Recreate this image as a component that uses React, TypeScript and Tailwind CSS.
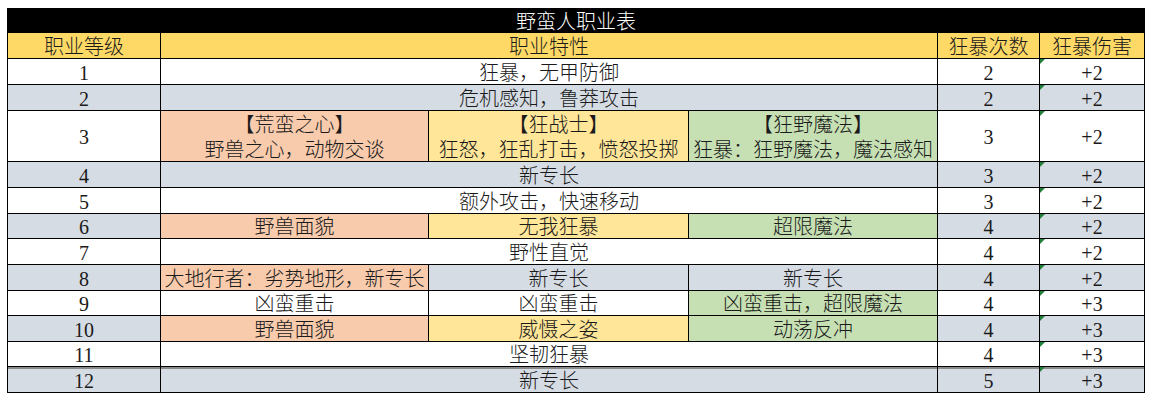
type Cell = { text: string; bg: string };

type Row = {
  level: string;
  bg: string;
  features: string | Cell[];
  count: string;
  dmg: string;
  divider?: boolean;
};

const W = 'bg-white';
const G = 'bg-[#d6dce4]';
const O = 'bg-[#f8cbad]';
const Y = 'bg-[#ffe699]';
const GR = 'bg-[#c6e0b4]';

const rows: Row[] = [
  { level: '1', bg: W, features: '狂暴，无甲防御', count: '2', dmg: '+2' },
  { level: '2', bg: G, features: '危机感知，鲁莽攻击', count: '2', dmg: '+2' },
  {
    level: '3',
    bg: W,
    features: [
      { text: '【荒蛮之心】\n野兽之心，动物交谈', bg: O },
      { text: '【狂战士】\n狂怒，狂乱打击，愤怒投掷', bg: Y },
      { text: '【狂野魔法】\n狂暴：狂野魔法，魔法感知', bg: GR },
    ],
    count: '3',
    dmg: '+2',
  },
  { level: '4', bg: G, features: '新专长', count: '3', dmg: '+2' },
  { level: '5', bg: W, features: '额外攻击，快速移动', count: '3', dmg: '+2' },
  {
    level: '6',
    bg: G,
    features: [
      { text: '野兽面貌', bg: O },
      { text: '无我狂暴', bg: Y },
      { text: '超限魔法', bg: GR },
    ],
    count: '4',
    dmg: '+2',
  },
  { level: '7', bg: W, features: '野性直觉', count: '4', dmg: '+2' },
  {
    level: '8',
    bg: G,
    features: [
      { text: '大地行者：劣势地形，新专长', bg: O },
      { text: '新专长', bg: G },
      { text: '新专长', bg: G },
    ],
    count: '4',
    dmg: '+2',
  },
  {
    level: '9',
    bg: W,
    features: [
      { text: '凶蛮重击', bg: W },
      { text: '凶蛮重击', bg: W },
      { text: '凶蛮重击，超限魔法', bg: GR },
    ],
    count: '4',
    dmg: '+3',
  },
  {
    level: '10',
    bg: G,
    features: [
      { text: '野兽面貌', bg: O },
      { text: '威慑之姿', bg: Y },
      { text: '动荡反冲', bg: GR },
    ],
    count: '4',
    dmg: '+3',
  },
  { level: '11', bg: W, features: '坚韧狂暴', count: '4', dmg: '+3' },
  { level: '12', bg: G, features: '新专长', count: '5', dmg: '+3', divider: true },
];

const base = 'flex items-center justify-center text-center whitespace-pre-line pt-[3px]';

const App = () => {
  return (
    <div className="bg-white w-[1152px] h-[400px] pt-[8px] pl-[7px] font-['Liberation_Serif','Noto_Sans_CJK_SC',serif] font-light text-[20px] leading-[25px] text-[#1a1a1a]">
      <div className="grid w-fit bg-black gap-px border border-black grid-cols-[152px_267px_259px_248px_101px_104px] grid-rows-[23px_25px_25px_25px_50px_25px_25px_24px_25px_25px_24px_25px_24px_25px]">
        {/* Title */}
        <div className={`${base} col-span-6 bg-black text-white pt-[1px]`}>野蛮人职业表</div>

        {/* Header */}
        <div className={`${base} bg-[#ffd966]`}>职业等级</div>
        <div className={`${base} col-span-3 bg-[#ffd966]`}>职业特性</div>
        <div className={`${base} bg-[#ffd966]`}>狂暴次数</div>
        <div className={`${base} bg-[#ffd966]`}>狂暴伤害</div>

        {rows.map((row) => {
          const line = row.divider ? 'shadow-[inset_0_2px_0_#8a8a8a]' : '';
          return (
            <div key={row.level} className="contents">
              <div className={`${base} ${row.bg} ${line}`}>{row.level}</div>
              {typeof row.features === 'string' ? (
                <div className={`${base} col-span-3 ${row.bg} ${line}`}>{row.features}</div>
              ) : (
                row.features.map((f, i) => (
                  <div key={i} className={`${base} ${f.bg} ${line} overflow-hidden`}>
                    {f.text}
                  </div>
                ))
              )}
              <div className={`${base} ${row.bg} ${line}`}>{row.count}</div>
              <div className={`${base} relative ${row.bg} ${line}`}>
                <span className="absolute left-0 top-0 w-0 h-0 border-t-[5px] border-r-[5px] border-t-[#21813a] border-r-transparent" />
                {row.dmg}
              </div>
            </div>
          );
        })}
      </div>
    </div>
  );
};

export default App;
